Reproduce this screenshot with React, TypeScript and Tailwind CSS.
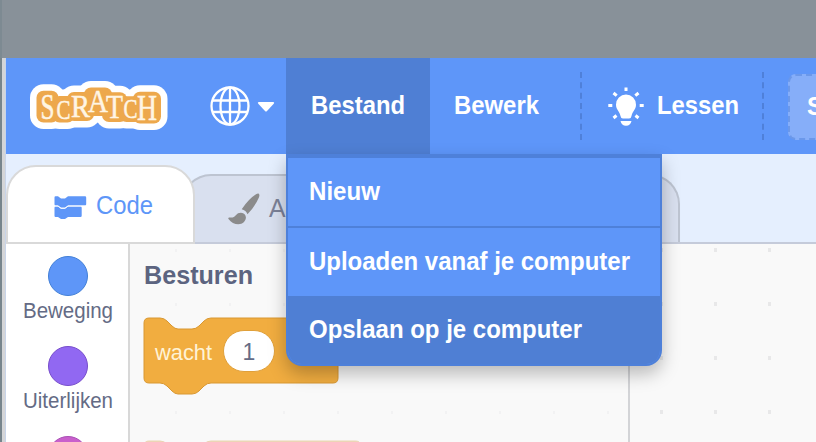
import React from "react";

const SANS = "font-['Liberation_Sans',Arial,sans-serif]";

function Label({ children, width, size, className = "" }: { children: string; width: number; size: number; className?: string }) {
  return (
    <svg width={width} height={30} className={`block shrink-0 overflow-visible ${className}`}>
      <text x={0} y={23} fontSize={size} textLength={width} lengthAdjust="spacingAndGlyphs" fill="currentColor">
        {children}
      </text>
    </svg>
  );
}

function Logo() {
  // letter, x, baseline, font size, width
  const letters: [string, number, number, number, number][] = [
    ["S", 12.5, 40.5, 36, 14],
    ["C", 28.5, 40.5, 28, 14],
    ["R", 43, 39, 32, 19],
    ["A", 60, 34, 31, 20],
    ["T", 78, 40, 33, 17],
    ["C", 95.5, 40, 27, 14],
    ["H", 109, 41.5, 36, 20],
  ];
  const plates = (grow: number, color: string) =>
    letters.map(([, x, y, s, w], i) => {
      const h = s * 0.66;
      return (
        <rect key={i} x={x + 3} y={y - h + 3} width={w - 6} height={h - 6} fill={color} stroke={color} strokeWidth={6 + grow * 2} strokeLinejoin="round" />
      );
    });
  return (
    <svg width="140" height="56" viewBox="0 0 140 56" className="block shrink-0 font-['Liberation_Serif',serif]">
      {plates(10.5, "#fff")}
      {plates(4, "#eda84c")}
      {letters.map(([c, x, y, s, w], i) => (
        <text key={i} x={x} y={y} fontSize={s} textLength={w} lengthAdjust="spacingAndGlyphs" fill="#fff5e3" stroke="#fff5e3" strokeWidth="0.5">
          {c}
        </text>
      ))}
    </svg>
  );
}

function Globe() {
  return (
    <svg width="40" height="40" viewBox="0 0 40 40" fill="none" stroke="#fff" strokeWidth="2.3" className="block shrink-0">
      <circle cx="20" cy="20" r="18.5" />
      <ellipse cx="20" cy="20" rx="9.5" ry="18.5" />
      <path d="M20 1.4v37.2M2.500 14.500h35M2.500 26h35" />
    </svg>
  );
}

function Bulb() {
  return (
    <svg width="36" height="40" viewBox="0 0 36 40" fill="#fff" className="mt-0.5 block shrink-0">
      <path d="M18 7.6a10 10 0 0 1 10 10.2c0 5-3.8 6.8-4.5 11.200q-.4 2.500-2.400 2.500h-6.200q-2 0-2.400-2.500C11.800 24.600 8 22.800 8 17.800A10 10 0 0 1 18 7.600z" />
      <path d="M12.500 34h11q-1 4.700-5.500 4.700t-5.500-4.700z" />
      <path d="M18 .500v3.500M.300 18.500h4M31.700 18.500h4M5.500 6l3.200 2.700M30.500 6l-3.200 2.700M5.500 31l3-2.500M30.500 31l-3-2.500" stroke="#fff" strokeWidth="3" />
    </svg>
  );
}

function CodeIcon() {
  return (
    <svg width="34" height="26" viewBox="0 0 34 26" fill="#5e96f8" className="mt-1 block shrink-0">
      <path d="M.500 2.500q0-1.200 1-1.200h2.500l3 2.200h4l3-2.200h17q1.200 0 1.200 1.200v6.800q0 1.200-1.200 1.200H14l-3 2.200H7l-3-2.200H1.500q-1 0-1-1.200z" />
      <path d="M.500 12.700q0-1.200 1-1.200h2.500l3 2.200h4l3-2.200h12.500q1.200 0 1.200 1.200v8q0 1.200-1.200 1.200H14l-3 2.200H7l-3-2.200H1.500q-1 0-1-1.200z" />
      <path d="M.500 11h3.500l3 2.200h4l3-2.200h18" fill="none" stroke="#fff" strokeWidth=".9" />
    </svg>
  );
}

function Brush() {
  return (
    <svg width="32" height="32" viewBox="0 0 32 32" fill="#8b8b8b" className="block shrink-0">
      <path d="M30.500.600q1.600.9.400 4Q27 13.500 19.500 21.300q-1.500-3.800-5.800-5Q20.500 6 28 1.300q1.600-1 2.500-.7z" />
      <path d="M13 19.800c5 .2 6.500 5.500 3 9.200-4 3.800-11.500 2.500-15.500-3.100-.7-1 .2-1.500 1.500-1.400 3 .2 4.300-.3 5.800-2.300q2-2.500 5.200-2.400z" />
    </svg>
  );
}

function Category({ name, width, dot }: { name: string; width: number; dot: string }) {
  return (
    <div className="flex h-[90px] shrink-0 flex-col items-center">
      <div className={`size-10 shrink-0 rounded-full border ${dot}`} />
      <Label width={width} size={21.5} className="-mt-px text-[#646b85]">{name}</Label>
    </div>
  );
}

export default function App() {
  return (
    <div className={`relative h-[442px] w-[816px] overflow-hidden bg-[#889199] ${SANS}`}>
      <div className="flex h-full flex-col">
        <div className="h-[58px] shrink-0 border-l-2 border-[#7d8a92]" />
        <div className="flex min-h-0 flex-1 border-l-2 border-[#77858c]">
          <div className="w-1 shrink-0 border-r border-[#c8d4e8] bg-[#d4d5d7]" />
          <div className="flex min-w-0 flex-1 flex-col bg-[#e5effe]">
            <header className="flex h-24 shrink-0 items-center bg-[#5e96f9] text-white">
              <div className="flex w-[280px] shrink-0 items-center pl-[22px]">
                <Logo />
                <div className="ml-[42px]"><Globe /></div>
                <svg width="18" height="12" viewBox="0 0 18 12" className="ml-[7px] mt-0.5"><path d="M2 1h14q2 0 .5 2L10 10q-1 1-2 0L1.500 3Q0 1 2 1z" fill="#fff" /></svg>
              </div>
              <div className="flex h-full w-36 shrink-0 items-center bg-[#4f7fd4] pl-[25px]">
                <Label width={94} size={25} className="font-bold">Bestand</Label>
              </div>
              <div className="w-[150px] shrink-0 pl-6"><Label width={85} size={25} className="font-bold">Bewerk</Label></div>
              <div className="flex h-[68px] w-[184px] shrink-0 items-center border-x-2 border-dashed border-[#4f80d9] pl-[26px]">
                <Bulb />
                <Label width={82} size={25} className="ml-[13px] font-bold">Lessen</Label>
              </div>
              <div className="ml-[24px] mt-px flex h-[66px] w-20 shrink-0 items-center rounded-lg border-2 border-dashed border-[#6b98ea] bg-[#86aef9] pl-[17px]">
                <Label width={16} size={25} className="font-bold">S</Label>
              </div>
            </header>
            <div className="flex h-[90px] shrink-0 items-end border-b-2 border-[#c5cbda]">
              <div className="z-10 -mb-0.5 flex h-[79px] w-[189px] shrink-0 items-center rounded-t-[30px] border-2 border-[#d9d9d9] bg-white pl-[46px] pt-[3px]">
                <CodeIcon />
                <Label width={57} size={25} className="ml-2 text-[#5e96f8]">Code</Label>
              </div>
              <div className="-ml-[14px] flex h-[68px] w-[240px] shrink-0 items-center rounded-t-[30px] border-2 border-b-0 border-[#bdc4d1] bg-[#d9e0ef] pl-[45px]">
                <Brush />
                <Label width={16.5} size={25} className="ml-[9px] text-[#7b8197]">A</Label>
              </div>
              <div className="-ml-2 h-[68px] w-[267px] shrink-0 rounded-t-[30px] border-2 border-b-0 border-[#bdc4d1] bg-[#d9e0ef]" />
            </div>
            <div className="flex min-h-0 flex-1">
              <aside className="flex w-[124px] shrink-0 flex-col border-r-2 border-[#d8d8d8] bg-white pl-0.5 pt-3">
                <Category name="Beweging" width={90} dot="border-[#4280d7] bg-[#5e96f8]" />
                <Category name="Uiterlijken" width={90} dot="border-[#774dcb] bg-[#9168f2]" />
                <div className="mx-auto size-10 shrink-0 rounded-full border border-[#aa50b6] bg-[#c95fcc]" />
              </aside>
              <main className="w-[500px] shrink-0 border-r-2 border-[#d3d4d7] bg-[#f9f9f9]">
                <svg width="498" height="198" viewBox="130 244 498 198" className="block">
                  <g fill="#f2f2f3">{[249, 303, 357, 411].flatMap((y) => [175, 229, 283, 337, 391, 445, 499, 553, 607].map((x) => <rect key={`${x}-${y}`} x={x} y={y} width="2" height="3" />))}</g>
                  <text x="144" y="284" fontSize="25.5" fontWeight="bold" textLength="109" lengthAdjust="spacingAndGlyphs" fill="#5c6480">Besturen</text>
                  <path d="M144 323q0-5 5-5h11q4 0 7 3l5 5q3 3 6 3h14q4 0 7-3l5-5q3-3 7-3h122q5 0 5 5v55q0 5-5 5H211q-4 0-7 3l-5 5q-3 3-7 3h-14q-3 0-6-3l-5-5q-3-3-7-3h-11q-5 0-5-5z" fill="#f1ad40" stroke="#d99832" />
                  <text x="155" y="360" fontSize="21.5" textLength="57" lengthAdjust="spacingAndGlyphs" fill="#fff3d6">wacht</text>
                  <rect x="223.5" y="330.5" width="51" height="41" rx="20.5" fill="#fff" stroke="#e0a03a" />
                  <text x="242.5" y="360" fontSize="23" fill="#646b85">1</text>
                  <path d="M144 446q0-5 5-5h11q4 0 7 3M204 444q3-3 7-3h144q5 0 5 3" fill="#eed7b8" stroke="#ead4b4" />
                </svg>
              </main>
              <div className="flex-1 bg-[#f9f9f9]">
                <svg width="186" height="198" viewBox="630 244 186 198" className="block" fill="#e8e8e9">
                  {[248, 302, 356, 410].flatMap((y) => [660, 714, 768].map((x) => <rect key={`${x}-${y}`} x={x} y={y} width="3" height="4" />))}
                </svg>
              </div>
            </div>
          </div>
        </div>
      </div>
      <div className="absolute left-[286px] top-[154px] z-20 flex h-[212px] w-[376px] flex-col overflow-hidden rounded-b-2xl border-2 border-t-4 border-[#4e80d9] bg-[#5e96f9] text-white shadow-[0_8px_18px_rgba(0,0,0,0.26)]">
        <div className="flex h-[70px] shrink-0 items-center border-b-2 border-[#4e80d9] pl-[21px]"><Label width={71} size={25} className="font-bold">Nieuw</Label></div>
        <div className="flex h-[68px] shrink-0 items-center pl-[21px]"><Label width={321} size={25} className="font-bold">Uploaden vanaf je computer</Label></div>
        <div className="flex flex-1 items-center bg-[#4f7fd4] pl-[21px]"><Label width={273} size={25} className="font-bold">Opslaan op je computer</Label></div>
      </div>
    </div>
  );
}
